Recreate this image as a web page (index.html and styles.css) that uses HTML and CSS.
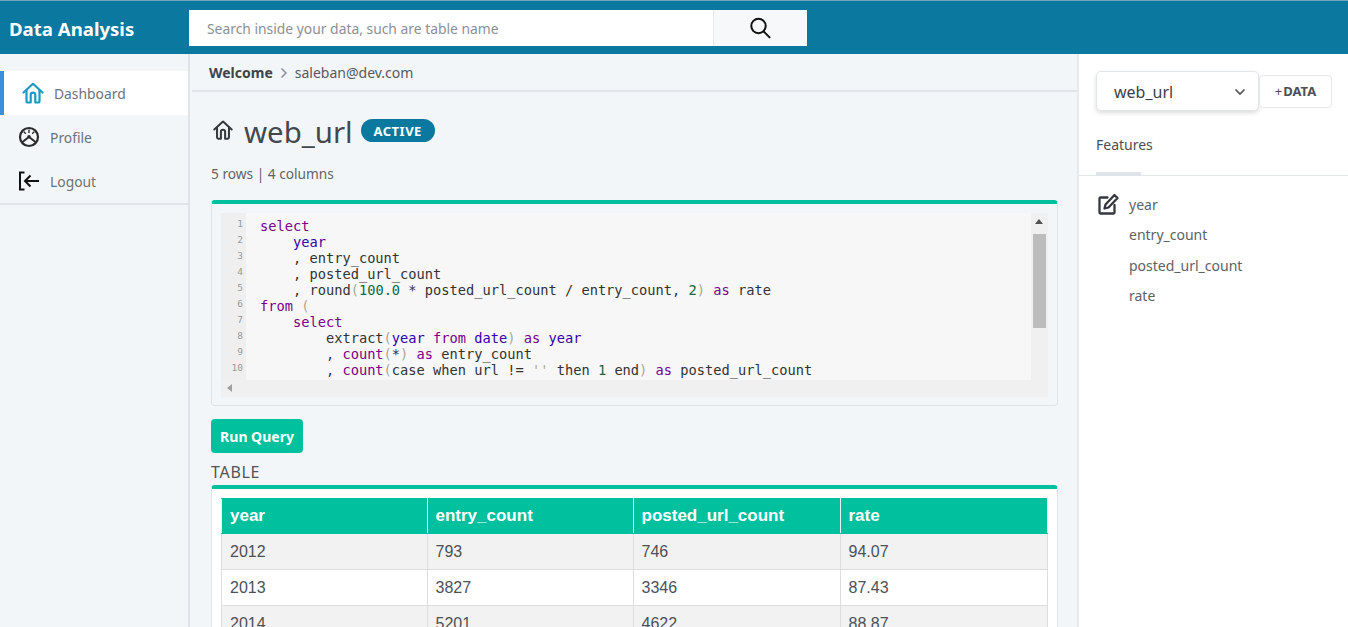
FILE: index.html
```html
<!DOCTYPE html>
<html lang="en">
<head>
<meta charset="utf-8">
<title>Data Analysis</title>
<link rel="stylesheet" href="styles.css">
</head>
<body>
<div class="app">
  <header class="topbar">
    <div class="brand">Data Analysis</div>
    <form class="search">
      <div class="search-input">Search inside your data, such are table name</div>
      <div class="search-btn">
        <svg width="24" height="24" viewBox="0 0 24 24" fill="none" stroke="#111" stroke-width="2"><circle cx="10.5" cy="10" r="7.2"/><path d="M15.6 15.4 21.6 21.4" stroke-linecap="round"/></svg>
      </div>
    </form>
  </header>
  <div class="layout">
    <nav class="sidebar">
      <ul class="menu">
        <li class="menu-item active">
          <svg class="menu-icon" width="24" height="24" viewBox="0 0 24 24" fill="none" stroke="#1b9ac4" stroke-width="2.2" stroke-linejoin="round" stroke-linecap="round"><path d="M2.500 11.500 12 2.800l9.500 8.700"/><path d="M5.500 9.500V20a1.500 1.500 0 0 0 1.500 1.500h2.700V14a2.300 2.300 0 0 1 4.600 0v7.500H17a1.500 1.500 0 0 0 1.500-1.500V9.500"/></svg>
          <span>Dashboard</span>
        </li>
        <li class="menu-item">
          <svg class="menu-icon" width="22" height="22" viewBox="0 0 22 22" fill="none" stroke="#2b2b2b" stroke-width="2.200"><circle cx="11" cy="11" r="9"/><path d="M11 3.500V7M5.800 5.800 7.800 7.800M16.200 5.800 14.200 7.800" stroke-width="1.400"/><path d="M10.200 11.500 4.500 16M11.800 11.500 17.500 16" stroke-width="2"/><circle cx="11" cy="10.800" r="1.800" fill="#2b2b2b" stroke="none"/></svg>
          <span>Profile</span>
        </li>
        <li class="menu-item">
          <svg class="menu-icon" width="22" height="22" viewBox="0 0 22 22" fill="none" stroke="#111" stroke-width="2"><path d="M6.500 2.500H2v17h4.500"/><path d="M21 11H7M12.500 5.500 7 11l5.500 5.500"/></svg>
          <span>Logout</span>
        </li>
      </ul>
    </nav>
    <main class="main">
      <div class="crumbs">
        <b>Welcome</b>
        <svg width="10" height="12" viewBox="0 0 10 12" fill="none" stroke="#8a9199" stroke-width="1.500"><path d="M2.500 1.500 7 6l-4.500 4.500"/></svg>
        <span>saleban@dev.com</span>
      </div>
      <section class="content">
        <div class="title-row">
          <svg class="title-icon" width="22" height="22" viewBox="0 0 24 24" fill="none" stroke="#33383e" stroke-width="2.200" stroke-linejoin="round" stroke-linecap="round"><path d="M2.500 11.500 12 2.800l9.500 8.700"/><path d="M5.500 9.500V20a1.500 1.500 0 0 0 1.500 1.500h2.700V14a2.300 2.300 0 0 1 4.600 0v7.500H17a1.500 1.500 0 0 0 1.500-1.500V9.500"/></svg>
          <h1>web_url</h1>
          <span class="badge">ACTIVE</span>
        </div>
        <p class="meta">5 rows | 4 columns</p>
        <div class="card editor-card">
          <div class="editor">
            <div class="editor-main">
              <div class="gutter">
                <div>1</div><div>2</div><div>3</div><div>4</div><div>5</div><div>6</div><div>7</div><div>8</div><div>9</div><div>10</div>
              </div>
              <pre class="code"><span class="k">select</span>
    <span class="b">year</span>
    , entry_count
    , posted_url_count
    , round<span class="p">(</span><span class="n">100.0</span> * posted_url_count / entry_count, <span class="n">2</span><span class="p">)</span> <span class="k">as</span> rate
<span class="k">from</span> <span class="p">(</span>
    <span class="k">select</span>
        extract<span class="p">(</span><span class="b">year</span> <span class="k">from</span> <span class="b">date</span><span class="p">)</span> <span class="k">as</span> <span class="b">year</span>
        , <span class="k">count</span><span class="p">(</span>*<span class="p">)</span> <span class="k">as</span> entry_count
        , <span class="k">count</span><span class="p">(</span>case when url != <span class="s">''</span> then <span class="n">1</span> end<span class="p">)</span> <span class="k">as</span> posted_url_count</pre>
              <div class="vbar">
                <span class="arrow up"></span>
                <span class="thumb"></span>
                <span class="arrow down"></span>
              </div>
            </div>
            <div class="hbar"><span class="arrow left"></span></div>
          </div>
        </div>
        <button class="run" type="button">Run Query</button>
        <div class="table-label">TABLE</div>
        <div class="card table-card">
          <table class="data">
            <thead>
              <tr><th class="col-a">year</th><th class="col-b">entry_count</th><th class="col-c">posted_url_count</th><th>rate</th></tr>
            </thead>
            <tbody>
              <tr><td>2012</td><td>793</td><td>746</td><td>94.07</td></tr>
              <tr><td>2013</td><td>3827</td><td>3346</td><td>87.43</td></tr>
              <tr><td>2014</td><td>5201</td><td>4622</td><td>88.87</td></tr>
            </tbody>
          </table>
        </div>
      </section>
    </main>
    <aside class="panel">
      <div class="panel-top">
        <div class="select">
          <span>web_url</span>
          <svg width="12" height="8" viewBox="0 0 12 8" fill="none" stroke="#555" stroke-width="1.700"><path d="M1.500 1.500 6 6l4.500-4.500"/></svg>
        </div>
        <button class="add" type="button"><span class="plus">+</span>DATA</button>
      </div>
      <div class="tabs"><div class="tab">Features</div></div>
      <ul class="features">
        <li>
          <svg class="edit" width="22" height="22" viewBox="0 0 22 22" fill="none" stroke="#33383e" stroke-width="2.300" stroke-linejoin="round" stroke-linecap="round"><path d="M10.500 4.500H3.500a1 1 0 0 0-1 1v14a1 1 0 0 0 1 1h13a1 1 0 0 0 1-1V12"/><path d="M17.500 2 20.500 5l-9 9.500-4 1 1-4z"/></svg>
          <span>year</span>
        </li>
        <li><span>entry_count</span></li>
        <li><span>posted_url_count</span></li>
        <li><span>rate</span></li>
      </ul>
    </aside>
  </div>
</div>
</body>
</html>
```
FILE: styles.css
```css
* { box-sizing: border-box; }
html, body { margin: 0; height: 100%; overflow: hidden; }
body {
  font-family: "Noto Sans", "Open Sans", sans-serif;
  font-size: 14px;
  color: #4a4f55;
  background: #f3f6f9;
}
.app { height: 627px; display: flex; flex-direction: column; overflow: hidden; }

.topbar {
  height: 54px;
  flex: none;
  background: #0b78a0;
  border-top: 1px solid #6fa9c0;
  display: flex;
  align-items: flex-start;
  padding-top: 9px;
}
.brand {
  width: 189px;
  padding-left: 9px;
  color: #fff;
  font-size: 18.6px;
  font-weight: 700;
  line-height: 38px;
}
.search { display: flex; width: 618px; height: 36px; background: #fff; }
.search-input {
  flex: 1;
  padding-left: 18px;
  line-height: 37px;
  font-size: 13.86px;
  color: #8b8f94;
}
.search-btn {
  width: 94px;
  background: #f7f8f9;
  border-left: 1px solid #e6e8ea;
  display: flex;
  align-items: center;
  justify-content: center;
  padding-right: 2px;
}

.layout { flex: 1; display: flex; min-height: 0; }

.sidebar {
  width: 190px;
  flex: none;
  border-right: 2px solid #dfe4e9;
  padding-top: 17px;
}
.menu {
  list-style: none;
  margin: 0;
  padding: 0;
  border-bottom: 2px solid #dfe4e9;
}
.menu-item {
  height: 44px;
  display: flex;
  align-items: center;
  gap: 10px;
  padding-left: 18px;
  font-size: 13.85px;
  color: #6d7278;
}
.menu-item.active {
  background: #fff;
  border-left: 4px solid #3b8fdb;
  gap: 9px;
  padding-left: 17px;
}
.menu-icon { flex: none; }

.main { flex: 1; min-width: 0; display: flex; flex-direction: column; border-right: 2px solid #e6eaee; }
.crumbs {
  height: 38px;
  flex: none;
  display: flex;
  align-items: center;
  gap: 6px;
  padding: 1px 0 0 17px;
  border-bottom: 2px solid #dfe4e9;
  margin-left: 2px;
  font-size: 14px;
  color: #555a60;
}
.crumbs b { color: #3f444a; }
.content { padding: 0 19px 0 21px; flex: 1; min-height: 0; }

.title-row { display: flex; align-items: center; height: 72px; padding-top: 8px; padding-left: 1px; }
.title-icon { margin-right: 10px; margin-bottom: 4px; }
.title-row h1 {
  margin: 0;
  font-size: 29.4px;
  font-weight: 400;
  color: #43484e;
  line-height: 40px;
}
.badge {
  margin-left: 8px;
  margin-bottom: 3px;
  height: 23px;
  width: 74px;
  border-radius: 12px;
  background: #0b78a0;
  color: #fff;
  font-size: 13px;
  font-weight: 700;
  letter-spacing: .5px;
  display: flex;
  align-items: center;
  justify-content: center;
}
.meta { margin: 0 0 16px; font-size: 13.7px; line-height: 20px; color: #60656b; }

.card {
  background: #f3f6f9;
  border: 1px solid #dfe4e9;
  border-top: 4px solid #00c09d;
  border-radius: 4px;
}
.editor-card { padding: 9px 9px 8px; height: 206px; }
.editor { background: #f0f0f0; height: 184px; display: flex; flex-direction: column; }
.editor-main { flex: 1; display: flex; min-height: 0; overflow: hidden; }
.gutter {
  width: 25px;
  flex: none;
  background: #efefef;
  padding-top: 3px;
  font-family: "DejaVu Sans Mono", monospace;
  font-size: 9.5px;
  line-height: 16px;
  color: #999;
  text-align: right;
  padding-right: 3px;
}
.code {
  flex: 1;
  margin: 0;
  min-width: 0;
  overflow: hidden;
  background: #f7f7f7;
  padding: 5px 0 0 14px;
  font-family: "DejaVu Sans Mono", monospace;
  font-size: 13.7px;
  line-height: 16px;
  color: #333;
}
.k { color: #708; }
.b { color: #30a; }
.n { color: #164; }
.p { color: #aaa89a; }
.s { color: #b8a78a; }
.vbar {
  width: 17px;
  flex: none;
  background: #f0f0f0;
  display: flex;
  flex-direction: column;
  align-items: center;
  position: relative;
  padding-top: 21px;
}
.thumb { width: 13px; height: 94px; background: #bcbcbc; }
.hbar { height: 17px; flex: none; background: #f0f0f0; position: relative; }
.arrow { position: absolute; width: 0; height: 0; border: 4px solid transparent; }
.arrow.up { top: 6px; left: 4px; border-bottom: 5px solid #505050; border-top: 0; }
.arrow.down { bottom: -11px; left: 4px; border-top: 5px solid #505050; border-bottom: 0; }
.arrow.left { left: 6px; top: 4px; border-right: 5px solid #a0a0a0; border-left: 0; }

.run {
  display: block;
  margin-top: 13px;
  height: 34px;
  width: 92px;
  padding: 0;
  border: 0;
  border-radius: 4px;
  background: #00c09d;
  color: #fff;
  font-family: inherit;
  font-size: 14px;
  font-weight: 700;
}
.table-label { margin-top: 8px; font-size: 16px; line-height: 22px; color: #4f545a; letter-spacing: .7px; }
.table-card { margin-top: 2px; background: #fff; padding: 9px 9px 0; }
.data {
  width: 100%;
  table-layout: fixed;
  border-collapse: collapse;
  font-family: "Liberation Sans", Arial, sans-serif;
  font-size: 16px;
  color: #4c5157;
}
.data th, .data td { text-align: left; padding: 0 8px; height: 36px; border: 1px solid #ddd; }
.data th { background: #00c09d; color: #fff; font-size: 17px; font-weight: 700; height: 35px; border-color: #00c09d #e8f5f2; }
.data .col-a { width: 205.5px; }
.data .col-b { width: 206px; }
.data .col-c { width: 207px; }
.data tbody tr:nth-child(odd) { background: #f2f2f2; }

.panel { width: 269px; flex: none; background: #fff; }
.panel-top { display: flex; align-items: center; padding: 17px 16px 0 17px; }
.select {
  width: 163px;
  height: 40px;
  border: 1px solid #e3e6e9;
  border-radius: 5px;
  background: #fff;
  box-shadow: 0 2px 4px rgba(0, 0, 0, .14);
  display: flex;
  align-items: center;
  justify-content: space-between;
  padding: 2px 12px 0 17px;
  font-size: 16px;
  color: #3a3f45;
}
.add {
  width: 73px;
  height: 33px;
  padding: 0;
  border: 1px solid #e3e6e9;
  border-radius: 4px;
  background: #fff;
  font-family: inherit;
  font-size: 13px;
  font-weight: 700;
  color: #4a4f55;
}
.plus { font-weight: 400; margin-right: 1px; }
.tabs { height: 48px; margin-top: 17px; border-bottom: 1px solid #e3e6e9; padding-left: 17px; display: flex; margin-bottom: 13.3px; }
.tab {
  width: 45px;
  height: 48px;
  white-space: nowrap;
  font-size: 14px;
  line-height: 20px;
  padding-top: 7px;
  color: #4a4f55;
  border-bottom: 4px solid #dfe4ea;
}
.features { list-style: none; margin: 0; padding: 0 0 0 18px; font-size: 14px; color: #5d6268; }
.features li { height: 30.3px; display: flex; align-items: center; position: relative; padding-left: 32px; }
.edit { position: absolute; left: 0; top: 4px; }
```
